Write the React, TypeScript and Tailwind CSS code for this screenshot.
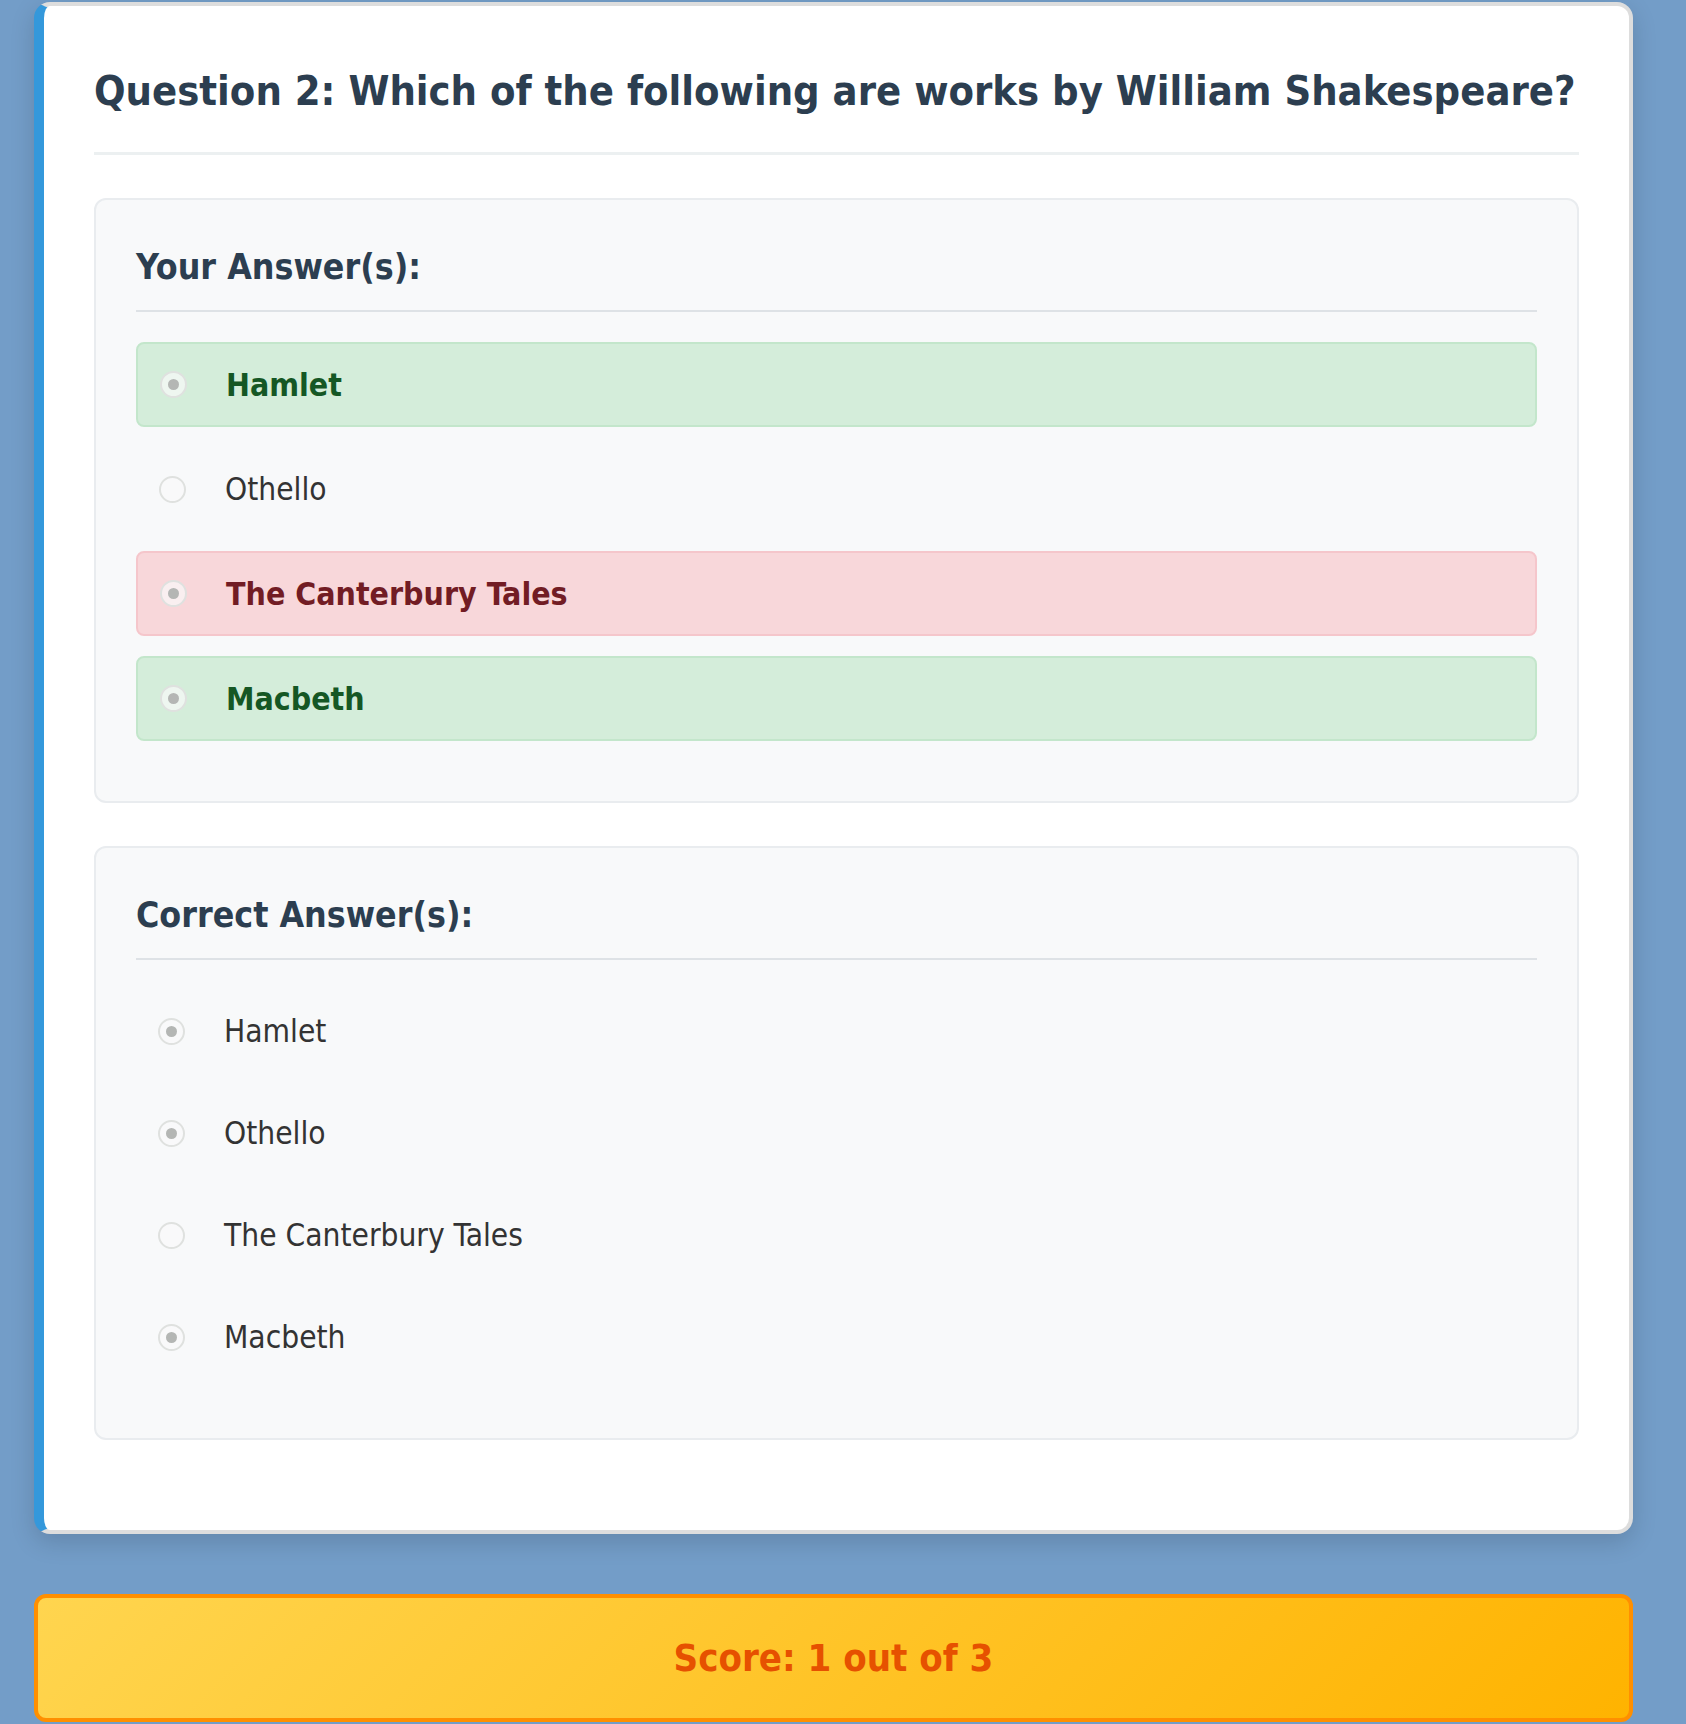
import React from "react";

type Status = "correct" | "wrong" | "plain";

interface Option {
  label: string;
  checked: boolean;
  status: Status;
}

const yourAnswers: Option[] = [
  { label: "Hamlet", checked: true, status: "correct" },
  { label: "Othello", checked: false, status: "plain" },
  { label: "The Canterbury Tales", checked: true, status: "wrong" },
  { label: "Macbeth", checked: true, status: "correct" },
];

const correctAnswers: Option[] = [
  { label: "Hamlet", checked: true, status: "plain" },
  { label: "Othello", checked: true, status: "plain" },
  { label: "The Canterbury Tales", checked: false, status: "plain" },
  { label: "Macbeth", checked: true, status: "plain" },
];

function Radio({ checked }: { checked: boolean }) {
  return (
    <span className="flex h-[27px] w-[27px] shrink-0 items-center justify-center rounded-full border-2 border-[#dfe1df] bg-[#f9f9f9]/70">
      {checked && <span className="h-[11px] w-[11px] rounded-full bg-[#b4b6b4]" />}
    </span>
  );
}

function OptionRow({ option, boxed }: { option: Option; boxed: boolean }) {
  if (option.status === "correct") {
    return (
      <div className="mb-5 flex h-[85px] items-center gap-[39px] rounded-lg border-2 border-[#c3e6cb] bg-[#d4edda] pl-[22px]">
        <Radio checked={option.checked} />
        <span className="text-[31.8px] font-bold leading-[38px] text-[#155724]">{option.label}</span>
      </div>
    );
  }
  if (option.status === "wrong") {
    return (
      <div className="mb-5 flex h-[85px] items-center gap-[39px] rounded-lg border-2 border-[#f5c6cb] bg-[#f8d7da] pl-[22px]">
        <Radio checked={option.checked} />
        <span className="text-[31.8px] font-bold leading-[38px] text-[#721c24]">{option.label}</span>
      </div>
    );
  }
  return (
    <div
      className={
        boxed
          ? "mb-5 flex h-[84px] items-center gap-[39px] border border-transparent pl-[22px]"
          : "mb-5 flex h-[82px] items-center gap-[39px] pl-[22px]"
      }
    >
      <Radio checked={option.checked} />
      <span className="text-[31.4px] leading-[38px] text-[#333]">{option.label}</span>
    </div>
  );
}

function AnswerSection({ title, options, boxed }: { title: string; options: Option[]; boxed: boolean }) {
  return (
    <section className="rounded-xl border-2 border-[#e9ecef] bg-[#f8f9fa] px-10 pt-10 pb-[40px]">
      <h3 className="mt-[6px] mb-[30px] border-b-2 border-[#dee2e6] pb-[23px] text-[35.4px] font-bold leading-[41px] text-[#2c3e50]">
        {title}
      </h3>
      {options.map((o) => (
        <OptionRow key={o.label} option={o} boxed={boxed} />
      ))}
    </section>
  );
}

export default function App() {
  return (
    <div className="min-h-screen bg-[#739dc8] pt-[2px] pl-[34px] font-['DejaVu_Sans_Condensed','DejaVu_Sans',sans-serif] font-stretch-condensed">
      {/* Question card */}
      <div className="w-[1599px] rounded-2xl border-4 border-[#dddddd] border-l-[10px] border-l-[#3498db] bg-white px-[50px] pt-[50px] pb-[90px] shadow-[0_8px_25px_rgba(0,0,0,0.15)]">
        <h2 className="mt-[11px] border-b-[3px] border-[#ecf0f1] pb-[37px] text-[41.3px] font-bold leading-[48px] text-[#2c3e50]">
          Question 2: Which of the following are works by William Shakespeare?
        </h2>

        <div className="mt-[43px] mb-[43px]">
          <AnswerSection title="Your Answer(s):" options={yourAnswers} boxed />
        </div>
        <AnswerSection title="Correct Answer(s):" options={correctAnswers} boxed={false} />
      </div>

      {/* Score */}
      <div className="mt-[60px] flex h-[128px] w-[1599px] items-center justify-center rounded-xl border-4 border-[#ff8f00] bg-[linear-gradient(135deg,#ffd54f,#ffb300)]">
        <span className="text-[38px] font-bold leading-[46px] text-[#e65100]">Score: 1 out of 3</span>
      </div>
    </div>
  );
}
